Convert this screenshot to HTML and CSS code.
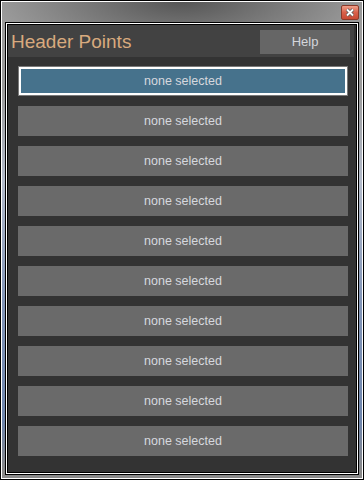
FILE: index.html
```html
<!DOCTYPE html>
<html>
<head>
  <link rel="stylesheet" href="styles.css">
</head>
<body>

<div class="window">
  <div class="window-inner">
    <!-- title bar with only the close button -->
    <div class="titlebar">
      <span class="close-btn">
        <svg width="10" height="9" viewBox="0 0 10 9">
          <path d="M2 1.5 L8 7.5 M8 1.5 L2 7.5" stroke="#5a5a5a" stroke-width="3.4"/>
          <path d="M2 1.5 L8 7.5 M8 1.5 L2 7.5" stroke="#fff" stroke-width="1.8"/>
        </svg>
      </span>
    </div>

    <div class="client">
      <div class="client-in">
        <div class="content">
          <div class="header">
            <span class="title">Header Points</span>
            <span class="help-btn">Help</span>
          </div>

          <div class="point-list">
            <div class="point selected">none selected</div>
            <div class="point">none selected</div>
            <div class="point">none selected</div>
            <div class="point">none selected</div>
            <div class="point">none selected</div>
            <div class="point">none selected</div>
            <div class="point">none selected</div>
            <div class="point">none selected</div>
            <div class="point">none selected</div>
            <div class="point">none selected</div>
          </div>
        </div>
      </div>
    </div>
  </div>
</div>

</body>
</html>
```

FILE: styles.css
```css
body {
  margin: 0;
  font-family: "Liberation Sans", Arial, sans-serif;
}

/* Outer window frame */
.window {
  width: 364px;
  height: 480px;
  box-sizing: border-box;
  border: 1px solid #000;
  background:
    radial-gradient(ellipse 190px 60px at 50% 0, #555, rgba(150, 150, 150, 0) 100%),
    linear-gradient(to bottom, #9c9c9c 0, #9c9c9c 90px, #b4bccb 180px, #8396b8 300px, #6f86ad 420px, #8a8a8a 470px);
}

.window-inner {
  height: 100%;
  box-sizing: border-box;
  border: 1px solid #fff;
  padding: 0 3px 3px 3px;
  display: flex;
  flex-direction: column;
}

.titlebar {
  height: 20px;
  display: flex;
  justify-content: flex-end;
  align-items: flex-start;
}

.close-btn {
  margin-top: 3px;
  width: 18px;
  height: 15px;
  box-sizing: border-box;
  border: 1px solid #8a3a2a;
  border-radius: 2px;
  background: linear-gradient(to bottom, #f0a08a, #d8604a 50%, #c84a34);
  display: flex;
  align-items: center;
  justify-content: center;
}

/* Client area: black / white / black frame */
.client {
  flex: 1;
  border: 1px solid #000;
}

.client-in {
  height: 100%;
  box-sizing: border-box;
  border: 1px solid #fff;
}

.content {
  height: 100%;
  box-sizing: border-box;
  border: 1px solid #000;
  background-color: #333;
}

.header {
  height: 32px;
  margin-right: 2px;
  background-color: #424242;
  display: flex;
  align-items: flex-start;
  justify-content: space-between;
}

.title {
  color: #d8aa7e;
  font-size: 19px;
  line-height: 32px;
  padding-left: 3px;
  padding-top: 1px;
}

.help-btn {
  margin-top: 5px;
  margin-right: 4px;
  width: 90px;
  height: 24px;
  background-color: #666;
  color: #d4d6dc;
  font-size: 13px;
  line-height: 24px;
  text-align: center;
}

.point-list {
  display: flex;
  flex-direction: column;
  gap: 10px;
  padding: 9px 8px 0 10px;
}

.point {
  height: 30px;
  background-color: #6a6a6a;
  color: #d6d8de;
  font-size: 12.5px;
  line-height: 30px;
  text-align: center;
}

.point.selected {
  box-sizing: border-box;
  border: 1px solid #7a7a7a;
  box-shadow: inset 0 0 0 2px #fff;
  background-color: #46728c;
  line-height: 28px;
}
```
